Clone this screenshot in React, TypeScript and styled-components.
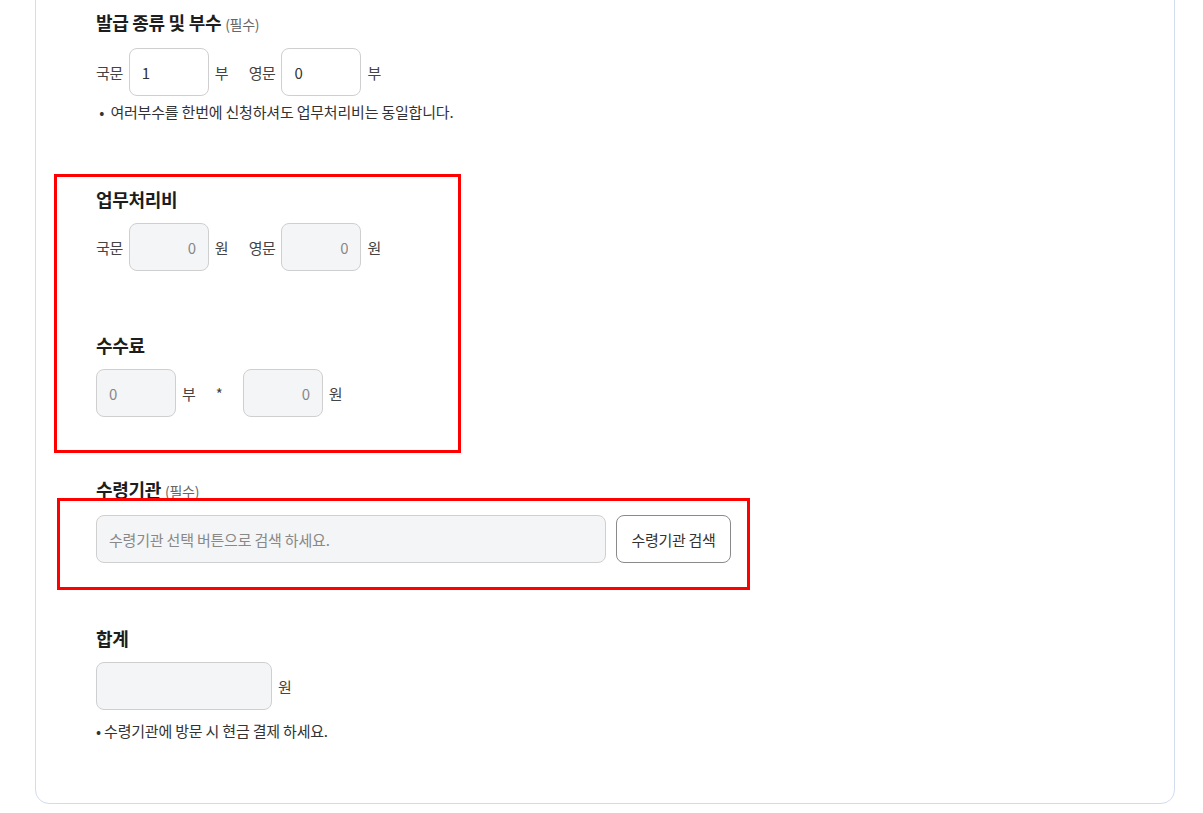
import React from "react";
import styled, { createGlobalStyle } from "styled-components";

const GlobalStyle = createGlobalStyle`
  body {
    margin: 0;
    background: #fff;
    font-family: "Noto Sans CJK KR", "Noto Sans", sans-serif;
    color: #222;
  }
`;

const Page = styled.div`
  position: relative;
  width: 1203px;
  height: 813px;
  overflow: hidden;
`;

const Card = styled.div`
  margin: -40px 0 0 35px;
  width: 1140px;
  box-sizing: border-box;
  border: 1px solid #d3dbef;
  border-radius: 14px;
  padding: 48px 0 62px 60px;
`;

const Section = styled.section<{ $gap?: number }>`
  margin-top: ${(p) => p.$gap ?? 0}px;
`;

const Title = styled.h3`
  margin: 0 0 11px;
  font-size: 18px;
  line-height: 26px;
  font-weight: 700;
  letter-spacing: -0.3px;
  color: #1d1d1d;
`;

const Required = styled.span`
  margin-left: 4px;
  font-size: 14px;
  font-weight: 400;
  color: #666;
  letter-spacing: -0.3px;
`;

const Row = styled.div`
  display: flex;
  align-items: center;
  height: 48px;
`;

const Label = styled.span`
  font-size: 15px;
  letter-spacing: -0.4px;
  color: #444;
  margin-right: 6px;
`;

const Unit = styled.span<{ $mr?: number }>`
  font-size: 15px;
  color: #444;
  margin-left: 6px;
  margin-right: ${(p) => p.$mr ?? 0}px;
`;

const Field = styled.input<{ $w: number; $right?: boolean; $grey?: boolean }>`
  width: ${(p) => p.$w}px;
  height: 48px;
  box-sizing: border-box;
  border: 1px solid #cfcfcf;
  border-radius: 8px;
  padding: 0 12px;
  font-family: inherit;
  font-size: 15px;
  letter-spacing: -0.2px;
  text-align: ${(p) => (p.$right ? "right" : "left")};
  background: ${(p) => (p.$grey ? "#f4f5f7" : "#fff")};
  color: ${(p) => (p.$grey ? "#888" : "#333")};
  outline: none;
  &::placeholder {
    color: #888;
  }
`;

const Times = styled.span`
  font-size: 15px;
  color: #444;
  margin: 0 20px;
`;

const SearchButton = styled.button`
  margin-left: 10px;
  width: 115px;
  height: 48px;
  box-sizing: border-box;
  border: 1px solid #8a8a8a;
  border-radius: 8px;
  background: #fff;
  font-family: inherit;
  font-size: 15px;
  letter-spacing: -0.3px;
  color: #333;
`;

const Note = styled.p<{ $top?: number }>`
  margin: ${(p) => p.$top ?? 6}px 0 0;
  font-size: 15px;
  line-height: 20px;
  letter-spacing: -0.2px;
  color: #333;
`;

// 캡처 위에 그려진 빨간 강조 박스
const Mark = styled.div<{ $x: number; $y: number; $w: number; $h: number }>`
  position: absolute;
  left: ${(p) => p.$x}px;
  top: ${(p) => p.$y}px;
  width: ${(p) => p.$w}px;
  height: ${(p) => p.$h}px;
  box-sizing: border-box;
  border: 3px solid #ff0000;
  pointer-events: none;
`;

export default function App() {
  return (
    <>
      <GlobalStyle />
      <Page>
        <Card>
          <Section>
            <Title>
              발급 종류 및 부수<Required>(필수)</Required>
            </Title>
            <Row>
              <Label>국문</Label>
              <Field $w={80} defaultValue="1" />
              <Unit $mr={20}>부</Unit>
              <Label>영문</Label>
              <Field $w={80} defaultValue="0" />
              <Unit>부</Unit>
            </Row>
            <Note>&nbsp;•&nbsp; 여러부수를 한번에 신청하셔도 업무처리비는 동일합니다.</Note>
          </Section>

          <Section $gap={64}>
            <Title>업무처리비</Title>
            <Row>
              <Label>국문</Label>
              <Field $w={80} $right $grey readOnly value="0" />
              <Unit $mr={20}>원</Unit>
              <Label>영문</Label>
              <Field $w={80} $right $grey readOnly value="0" />
              <Unit>원</Unit>
            </Row>
          </Section>

          <Section $gap={61}>
            <Title>수수료</Title>
            <Row>
              <Field $w={80} $grey readOnly value="0" />
              <Unit>부</Unit>
              <Times>*</Times>
              <Field $w={80} $right $grey readOnly value="0" />
              <Unit>원</Unit>
            </Row>
          </Section>

          <Section $gap={59}>
            <Title>
              수령기관<Required>(필수)</Required>
            </Title>
            <Row>
              <Field
                $w={510}
                $grey
                readOnly
                placeholder="수령기관 선택 버튼으로 검색 하세요."
              />
              <SearchButton>수령기관 검색</SearchButton>
            </Row>
          </Section>

          <Section $gap={62}>
            <Title>합계</Title>
            <Row>
              <Field $w={176} $grey readOnly value="" />
              <Unit>원</Unit>
            </Row>
            <Note $top={11}>• 수령기관에 방문 시 현금 결제 하세요.</Note>
          </Section>
        </Card>

        <Mark $x={54} $y={174} $w={407} $h={279} />
        <Mark $x={57} $y={498} $w={693} $h={92} />
      </Page>
    </>
  );
}
